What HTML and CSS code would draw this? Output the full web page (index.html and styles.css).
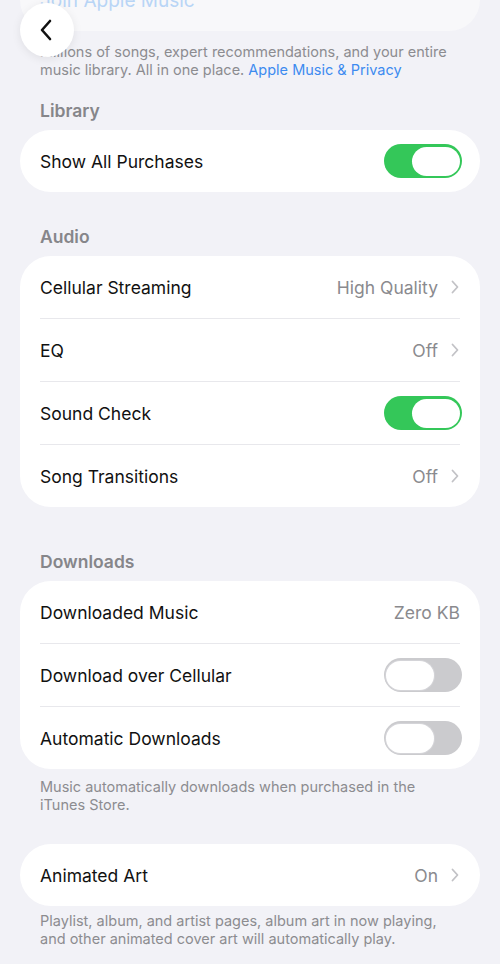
FILE: index.html
```html
<!DOCTYPE html>
<html>
<head>
  <title>Music</title>
  <link rel="stylesheet" href="styles.css">
</head>
<body>
  <button class="back-button" aria-label="Back">
    <svg width="14" height="22" viewBox="0 0 14 22">
      <path d="M11 2 L3 11 L11 20" fill="none" stroke="#111" stroke-width="2.6" stroke-linecap="round" stroke-linejoin="round"/>
    </svg>
  </button>

  <div class="card card-top">
    <div class="row">
      <span class="link-faded">Join Apple Music</span>
    </div>
  </div>
  <p class="footer footer-top">Millions of songs, expert recommendations, and your entire music library. All in one place. <span class="link">Apple Music &amp; Privacy</span></p>

  <h2 class="section-title library-title">Library</h2>
  <div class="card">
    <div class="row">
      <span class="label">Show All Purchases</span>
      <span class="toggle on"><span class="knob"></span></span>
    </div>
  </div>

  <h2 class="section-title audio-title">Audio</h2>
  <div class="card">
    <div class="row">
      <span class="label">Cellular Streaming</span>
      <span class="value">High Quality
        <svg class="chevron" width="8" height="14" viewBox="0 0 8 14"><path d="M1.5 1.5 L6.5 7 L1.5 12.5" fill="none" stroke="#c2c2c6" stroke-width="1.8" stroke-linecap="round" stroke-linejoin="round"/></svg>
      </span>
    </div>
    <div class="row">
      <span class="label">EQ</span>
      <span class="value">Off
        <svg class="chevron" width="8" height="14" viewBox="0 0 8 14"><path d="M1.5 1.5 L6.5 7 L1.5 12.5" fill="none" stroke="#c2c2c6" stroke-width="1.8" stroke-linecap="round" stroke-linejoin="round"/></svg>
      </span>
    </div>
    <div class="row">
      <span class="label">Sound Check</span>
      <span class="toggle on"><span class="knob"></span></span>
    </div>
    <div class="row">
      <span class="label">Song Transitions</span>
      <span class="value">Off
        <svg class="chevron" width="8" height="14" viewBox="0 0 8 14"><path d="M1.5 1.5 L6.5 7 L1.5 12.5" fill="none" stroke="#c2c2c6" stroke-width="1.8" stroke-linecap="round" stroke-linejoin="round"/></svg>
      </span>
    </div>
  </div>

  <h2 class="section-title downloads-title">Downloads</h2>
  <div class="card">
    <div class="row">
      <span class="label">Downloaded Music</span>
      <span class="value">Zero KB</span>
    </div>
    <div class="row">
      <span class="label">Download over Cellular</span>
      <span class="toggle"><span class="knob"></span></span>
    </div>
    <div class="row">
      <span class="label">Automatic Downloads</span>
      <span class="toggle"><span class="knob"></span></span>
    </div>
  </div>
  <p class="footer">Music automatically downloads when purchased in the iTunes Store.</p>

  <div class="card art-card">
    <div class="row">
      <span class="label">Animated Art</span>
      <span class="value">On
        <svg class="chevron" width="8" height="14" viewBox="0 0 8 14"><path d="M1.5 1.5 L6.5 7 L1.5 12.5" fill="none" stroke="#c2c2c6" stroke-width="1.8" stroke-linecap="round" stroke-linejoin="round"/></svg>
      </span>
    </div>
  </div>
  <p class="footer footer-art">Playlist, album, and artist pages, album art in now playing, and other animated cover art will automatically play.</p>
</body>
</html>
```

FILE: styles.css
```css
body {
  margin: 0;
  background-color: #f2f2f7;
  font-family: Inter, "Noto Sans", sans-serif;
  color: #000000;
  overflow: hidden;
}

.back-button {
  position: absolute;
  left: 20px;
  top: 3px;
  width: 54px;
  height: 54px;
  border: none;
  border-radius: 50%;
  background-color: #ffffff;
  box-shadow: 0 2px 10px rgba(0, 0, 0, 0.08);
  display: flex;
  align-items: center;
  justify-content: center;
  padding: 0 3px 0 0;
}

.card {
  margin: 0 20px;
  background-color: #ffffff;
  border-radius: 31px;
  overflow: hidden;
}

.card-top {
  margin-top: -31px;
  background-color: #f8f8fa;
}

.row {
  height: 63px;
  box-sizing: border-box;
  margin: 0 20px;
  display: flex;
  align-items: center;
  justify-content: space-between;
  font-size: 17.5px;
  color: #111111;
  border-bottom: 1px solid #e8e8ec;
}

.card .row:last-child {
  border-bottom: none;
  height: 62px;
}

.link-faded {
  color: #b8d5f6;
  font-size: 19px;
}

.value {
  color: #8a8a8e;
  display: flex;
  align-items: center;
}

.chevron {
  margin-left: 13px;
  margin-right: 1px;
}

.toggle {
  width: 78px;
  height: 34px;
  border-radius: 17px;
  background-color: #cbcbce;
  display: flex;
  align-items: center;
  padding: 0 2px;
  box-sizing: border-box;
  margin-right: -2px;
}

.toggle .knob {
  width: 48px;
  height: 29px;
  border-radius: 15px;
  background-color: #ffffff;
  box-shadow: 0 0 0 1px #d4d4d8;
}

.toggle.on {
  background-color: #34c759;
  justify-content: flex-end;
}

.toggle.on .knob {
  box-shadow: none;
}

.section-title {
  margin: 0 40px 9px;
  font-size: 17.5px;
  line-height: 20px;
  font-weight: 600;
  color: #86868a;
}

.library-title {
  margin-top: 23px;
}

.audio-title {
  margin-top: 35px;
}

.downloads-title {
  margin-top: 45px;
}

.footer {
  margin: 9px 40px 0;
  font-size: 14.5px;
  line-height: 17.5px;
  color: #8c8c90;
}

.footer-top {
  margin-top: 12px;
}

.link {
  color: #3d8bf0;
}

.art-card {
  margin-top: 31px;
}

.footer-art {
  margin-top: 6px;
}
```
